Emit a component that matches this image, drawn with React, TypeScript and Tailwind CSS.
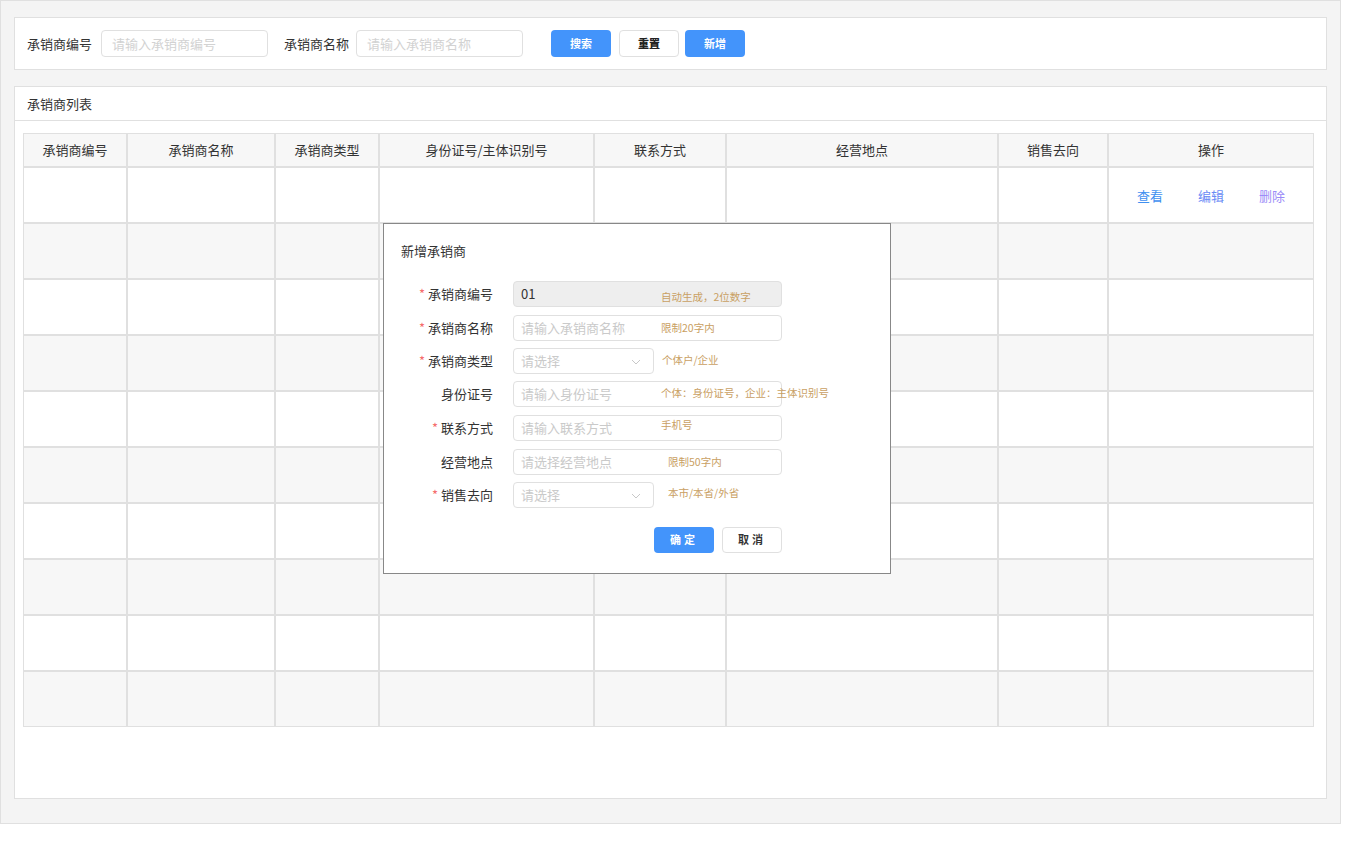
import React from 'react';

const columns = [
  { title: '承销商编号', width: 'w-[104px]' },
  { title: '承销商名称', width: 'w-[148px]' },
  { title: '承销商类型', width: 'w-[104px]' },
  { title: '身份证号/主体识别号', width: 'w-[215px]' },
  { title: '联系方式', width: 'w-[132px]' },
  { title: '经营地点', width: 'w-[272px]' },
  { title: '销售去向', width: 'w-[110px]' },
  { title: '操作', width: 'w-[206px]' },
];

const rows = Array.from({ length: 10 }, (_, i) => i);

interface FieldProps {
  label: string;
  required?: boolean;
  kind: 'input' | 'select' | 'disabled';
  placeholder?: string;
  value?: string;
  hint: string;
  hintLeft: string;
  hintTop: string;
  mt: string;
}

const fields: FieldProps[] = [
  { label: '承销商编号', required: true, kind: 'disabled', value: '01', hint: '自动生成，2位数字', hintLeft: 'left-[148px]', hintTop: 'top-[9px]', mt: 'mt-0' },
  { label: '承销商名称', required: true, kind: 'input', placeholder: '请输入承销商名称', hint: '限制20字内', hintLeft: 'left-[148px]', hintTop: 'top-[6px]', mt: 'mt-[8px]' },
  { label: '承销商类型', required: true, kind: 'select', placeholder: '请选择', hint: '个体户/企业', hintLeft: 'left-[149px]', hintTop: 'top-[5px]', mt: 'mt-[7px]' },
  { label: '身份证号', kind: 'input', placeholder: '请输入身份证号', hint: '个体：身份证号，企业：主体识别号', hintLeft: 'left-[148px]', hintTop: 'top-[5px]', mt: 'mt-[7px]' },
  { label: '联系方式', required: true, kind: 'input', placeholder: '请输入联系方式', hint: '手机号', hintLeft: 'left-[148px]', hintTop: 'top-[3px]', mt: 'mt-[8px]' },
  { label: '经营地点', kind: 'input', placeholder: '请选择经营地点', hint: '限制50字内', hintLeft: 'left-[155px]', hintTop: 'top-[6px]', mt: 'mt-[8px]' },
  { label: '销售去向', required: true, kind: 'select', placeholder: '请选择', hint: '本市/本省/外省', hintLeft: 'left-[155px]', hintTop: 'top-[4px]', mt: 'mt-[7px]' },
];

const Chevron = () => (
  <svg width="10" height="6" viewBox="0 0 10 6" fill="none" className="absolute right-[12px] top-[10px]">
    <path d="M1 1l4 4 4-4" stroke="#c8c8c8" strokeWidth="1" />
  </svg>
);

const FormRow = ({ label, required, kind, placeholder, value, hint, hintLeft, hintTop, mt }: FieldProps) => (
  <div className={`flex items-center h-[26px] ${mt}`}>
    <div className="w-[109px] text-right text-[13px] text-[#333]">
      {required && <span className="text-[#f56c6c] mr-[3px]">*</span>}
      {label}
    </div>
    <div className="relative ml-[20px] h-[26px]">
      {kind === 'select' ? (
        <div className="relative w-[141px] h-[26px] border border-[#e0e0e0] rounded-[4px] px-[7px] flex items-center text-[13px] text-[#cacaca]">
          {placeholder}
          <Chevron />
        </div>
      ) : kind === 'disabled' ? (
        <div className="w-[269px] h-[26px] border border-[#e0e0e0] rounded-[4px] bg-[#eeeeee] px-[7px] flex items-center text-[13px] text-[#333]">
          {value}
        </div>
      ) : (
        <div className="w-[269px] h-[26px] border border-[#e0e0e0] rounded-[4px] bg-white px-[7px] flex items-center text-[13px] text-[#cacaca]">
          {placeholder}
        </div>
      )}
      <span className={`absolute ${hintLeft} ${hintTop} whitespace-nowrap text-[10.5px] leading-[14px] text-[#c9a063]`}>{hint}</span>
    </div>
  </div>
);

const App = (): React.JSX.Element => {
  return (
    <div className="relative min-h-screen bg-white font-['Noto_Sans_CJK_SC','Noto_Sans',sans-serif]">
      <div className="w-[1341px] h-[824px] bg-[#f4f4f4] border border-[#e0e0e0] px-[13px] pt-[16px]">
        {/* search bar */}
        <div className="h-[53px] bg-white border border-[#e0e0e0] flex items-center pl-[12px]">
          <span className="text-[13px] text-[#333]">承销商编号</span>
          <div className="ml-[9px] w-[167px] h-[27px] border border-[#e0e0e0] rounded-[4px] px-[10px] flex items-center text-[13px] text-[#d2d2d2]">请输入承销商编号</div>
          <span className="ml-[16px] text-[13px] text-[#333]">承销商名称</span>
          <div className="ml-[7px] w-[167px] h-[27px] border border-[#e0e0e0] rounded-[4px] px-[10px] flex items-center text-[13px] text-[#d2d2d2]">请输入承销商名称</div>
          <button className="ml-[28px] w-[60px] h-[27px] rounded-[4px] bg-[#4394fb] text-white text-[11px] font-bold">搜索</button>
          <button className="ml-[8px] w-[60px] h-[27px] rounded-[4px] bg-white border border-[#e0e0e0] text-[#222] text-[11px] font-black">重置</button>
          <button className="ml-[6px] w-[60px] h-[27px] rounded-[4px] bg-[#4394fb] text-white text-[11px] font-bold">新增</button>
        </div>

        {/* list */}
        <div className="mt-[16px] h-[713px] bg-white border border-[#e0e0e0]">
          <div className="h-[34px] border-b border-[#e0e0e0] pl-[12px] flex items-center text-[13px] text-[#333]">承销商列表</div>
          <div className="mt-[12px] ml-[8px]">
            <div className="flex">
              {columns.map((c) => (
                <div key={c.title} className={`${c.width} h-[34px] border border-[#e0e0e0] bg-[#f7f7f7] flex items-center justify-center text-[13px] text-[#333]`}>
                  {c.title}
                </div>
              ))}
            </div>
            {rows.map((r) => (
              <div key={r} className="flex">
                {columns.map((c) => (
                  <div key={c.title} className={`${c.width} h-[56px] border border-[#e0e0e0] ${r % 2 === 0 ? 'bg-white' : 'bg-[#f7f7f7]'} flex items-center justify-center text-[13px]`}>
                    {r === 0 && c.title === '操作' && (
                      <div className="flex gap-[35px] pt-[2px]">
                        <span className="text-[#4090f0]">查看</span>
                        <span className="text-[#6a8bf5]">编辑</span>
                        <span className="text-[#9b8cf7]">删除</span>
                      </div>
                    )}
                  </div>
                ))}
              </div>
            ))}
          </div>
        </div>
      </div>

      {/* dialog */}
      <div className="absolute left-[383px] top-[223px] w-[508px] h-[351px] bg-white border border-[#888]">
        <div className="pl-[17px] pt-[17px] text-[13px] text-[#333]">新增承销商</div>
        <div className="mt-[20px]">
          {fields.map((f) => (
            <FormRow key={f.label} {...f} />
          ))}
        </div>
        <div className="mt-[19px] pl-[270px] flex gap-[8px]">
          <button className="w-[60px] h-[26px] rounded-[4px] bg-[#4394fb] text-white text-[11px] font-bold tracking-[3px]">确定</button>
          <button className="w-[60px] h-[26px] rounded-[4px] bg-white border border-[#e0e0e0] text-[#333] text-[11px] font-bold tracking-[3px]">取消</button>
        </div>
      </div>
    </div>
  );
};

export default App;
